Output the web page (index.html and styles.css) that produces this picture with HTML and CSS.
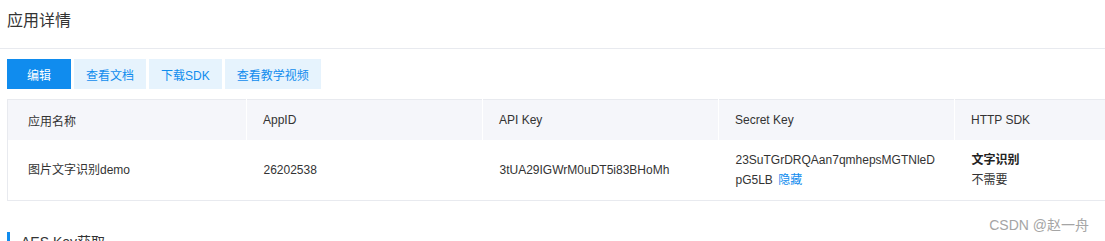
FILE: index.html
```html
<!DOCTYPE html>
<html lang="zh-CN">
<head>
    <meta charset="UTF-8">
    <meta name="viewport" content="width=device-width, initial-scale=1.0">
    <title>应用详情</title>
    <link rel="stylesheet" href="styles.css">
</head>
<body>

<div class="page-title">应用详情</div>

<div class="content">
    <div class="toolbar">
        <button type="button" class="btn btn-primary">编辑</button>
        <button type="button" class="btn">查看文档</button>
        <button type="button" class="btn">下载SDK</button>
        <button type="button" class="btn">查看教学视频</button>
    </div>

    <table class="app-table">
        <colgroup>
            <col class="col-first">
            <col class="col">
            <col class="col">
            <col class="col">
            <col class="col">
        </colgroup>
        <thead>
            <tr>
                <th>应用名称</th>
                <th>AppID</th>
                <th>API Key</th>
                <th>Secret Key</th>
                <th>HTTP SDK</th>
            </tr>
        </thead>
        <tbody>
            <tr>
                <td>图片文字识别demo</td>
                <td>26202538</td>
                <td>3tUA29IGWrM0uDT5i83BHoMh</td>
                <td class="secret">23SuTGrDRQAan7qmhepsMGTNleD<br>pG5LB <a href="#" class="link">隐藏</a></td>
                <td><strong>文字识别</strong><br>不需要</td>
            </tr>
        </tbody>
    </table>

    <div class="section-title">AES Key获取</div>
</div>

<div class="watermark">CSDN @赵一舟</div>

</body>
</html>
```

FILE: styles.css
```css
body {
    font-family: "Liberation Sans", Arial, "Noto Sans CJK SC", sans-serif;
    margin: 0;
    padding: 0;
    color: #333;
    background: #fff;
    overflow: hidden;
}
.page-title {
    height: 48px;
    line-height: 41px;
    padding-left: 7px;
    font-size: 16px;
    border-bottom: 1px solid #e8eaef;
}
.content {
    padding: 10px 0 0 7px;
}
.toolbar {
    display: flex;
    gap: 3px;
    height: 30px;
    margin-bottom: 10px;
}
.btn {
    min-width: 64px;
    height: 30px;
    padding: 0 12px;
    border: none;
    font-family: inherit;
    font-size: 12px;
    color: #108cee;
    background-color: #e6f3fd;
    cursor: pointer;
}
.btn-primary {
    color: #fff;
    background-color: #108cee;
}
.app-table {
    width: 1184px;
    table-layout: fixed;
    border-collapse: collapse;
    border: 1px solid #e8eaef;
    font-size: 12px;
}
.col-first {
    width: 239px;
}
.col {
    width: 236px;
}
.app-table th {
    height: 40px;
    padding: 0 0 0 16px;
    text-align: left;
    font-weight: normal;
    background-color: #f5f6fa;
    border-left: 1px solid #fff;
}
.app-table th:first-child {
    padding-left: 20px;
    border-left: none;
}
.app-table td {
    height: 60px;
    padding: 0 16px 0 20px;
    line-height: 20px;
    vertical-align: middle;
}
.app-table td:not(:first-child) {
    padding-left: 17px;
}
.app-table strong {
    color: #222;
}
.link {
    color: #108cee;
    text-decoration: none;
    margin-left: 2px;
}
.section-title {
    margin-top: 31px;
    padding-left: 11px;
    border-left: 3px solid #108cee;
    font-size: 14px;
    line-height: 20px;
}
.watermark {
    position: absolute;
    top: 214px;
    right: 16px;
    font-size: 14px;
    color: #a5a5a5;
}
```
